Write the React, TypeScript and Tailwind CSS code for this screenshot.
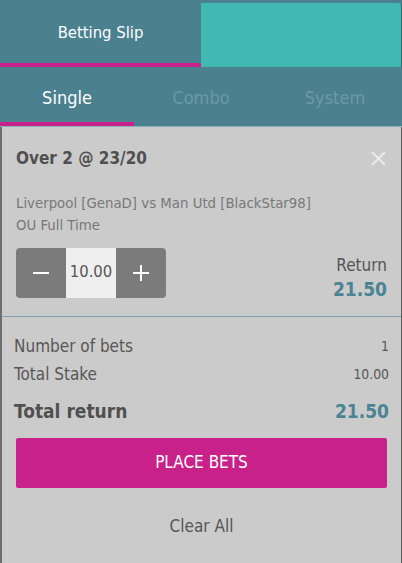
import React, { useState } from 'react';

const font = { fontFamily: '"DejaVu Sans Condensed", "DejaVu Sans", sans-serif' };

const App = () => {
  const [stake, setStake] = useState(10);
  const [tab, setTab] = useState('Single');
  const odds = 2.15;
  const ret = (stake * odds).toFixed(2);

  return (
    <div className="w-[402px] h-[563px] bg-[#4b808f] flex flex-col overflow-hidden" style={font}>
      {/* top tabs */}
      <div className="flex h-[67px]">
        <div className="w-[201px] flex flex-col">
          <div className="flex-1 flex items-center justify-center pt-[3px] text-white text-[16.5px]">Betting Slip</div>
          <div className="h-[4px] bg-[#c8228a]" />
        </div>
        <div className="flex-1 mt-[3px] bg-[#41b9b3] rounded-tr-[3px] border-r border-[#3a5f68]" />
      </div>

      {/* bet type tabs */}
      <div className="flex h-[60px] border-b border-[#8fb0b8]">
        {['Single', 'Combo', 'System'].map((t) => (
          <button
            key={t}
            onClick={() => setTab(t)}
            className={`w-[134px] flex flex-col ${t === 'System' ? 'flex-1' : ''}`}
          >
            <span className={`flex-1 flex items-center justify-center pt-[5px] text-[18px] ${tab === t ? 'text-white' : 'text-[#6a9aa6]'}`}>{t}</span>
            <span className={`h-[4px] w-full ${tab === t ? 'bg-[#c8228a]' : ''}`} />
          </button>
        ))}
      </div>

      {/* slip body */}
      <div className="flex-1 bg-[#cbcbcb] border-l-2 border-r border-l-[#6f6f6f] border-r-[#5e5e5e] flex flex-col">
        <div className="px-[14px] pt-[19px]">
          <div className="flex items-center justify-between">
            <span className="text-[17px] font-bold text-[#505050]">Over 2 @ 23/20</span>
            <svg width="15" height="15" viewBox="0 0 15 15" className="mr-[1px]">
              <path d="M1 1 L14 14 M14 1 L1 14" stroke="#ececec" strokeWidth="1.8" />
            </svg>
          </div>
          <div className="mt-[20px] text-[14.8px] leading-[22px] text-[#787878]">
            <div>Liverpool [GenaD] vs Man Utd [BlackStar98]</div>
            <div>OU Full Time</div>
          </div>
          <div className="mt-[12px] flex items-start justify-between">
            <div className="flex h-[50px] w-[150px] rounded-[4px] overflow-hidden">
              <button
                onClick={() => setStake((s) => Math.max(0, s - 1))}
                className="w-[50px] bg-[#7b7b7b] flex items-center justify-center"
              >
                <span className="block w-[16px] h-[2px] bg-white" />
              </button>
              <div className="w-[50px] bg-[#efefef] flex items-center justify-center text-[16.5px] text-[#555]">
                {stake.toFixed(2)}
              </div>
              <button
                onClick={() => setStake((s) => s + 1)}
                className="w-[50px] bg-[#7b7b7b] flex items-center justify-center"
              >
                <svg width="16" height="16" viewBox="0 0 16 16">
                  <path d="M8 0 V16 M0 8 H16" stroke="#fff" strokeWidth="2" />
                </svg>
              </button>
            </div>
            <div className="flex flex-col items-end pt-[6px]">
              <span className="text-[17px] text-[#555] leading-[22px]">Return</span>
              <span className="text-[19px] font-bold text-[#4a8494] leading-[26px]">{ret}</span>
            </div>
          </div>
        </div>

        <div className="mt-[14px] h-px bg-[#7fa2ab]" />

        <div className="px-[12px] pt-[16px]">
          <div className="flex items-center justify-between h-[28px] text-[#575757]">
            <span className="text-[17px]">Number of bets</span>
            <span className="text-[13.8px]">1</span>
          </div>
          <div className="flex items-center justify-between h-[28px] text-[#575757]">
            <span className="text-[17px]">Total Stake</span>
            <span className="text-[13.8px]">{stake.toFixed(2)}</span>
          </div>
          <div className="flex items-center justify-between h-[40px] mt-[3px]">
            <span className="text-[19px] font-bold text-[#505050]">Total return</span>
            <span className="text-[19px] font-bold text-[#4a8494]">{ret}</span>
          </div>
        </div>

        <div className="px-[14px] mt-[6px]">
          <button className="w-full h-[50px] bg-[#c8228a] rounded-[2px] text-white text-[17px]">PLACE BETS</button>
        </div>
        <div className="mt-[26px] text-center text-[17px] leading-[24px] text-[#555]">Clear All</div>
      </div>
    </div>
  );
};

export default App;
